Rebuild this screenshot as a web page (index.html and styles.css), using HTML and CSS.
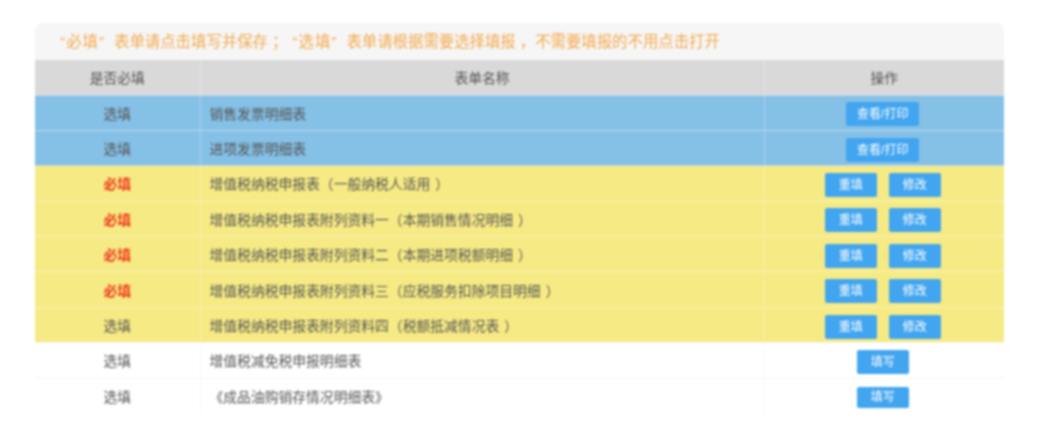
FILE: index.html
```html
<!DOCTYPE html>
<html lang="zh-CN">
<head>
<meta charset="UTF-8" />
<title>申报表单</title>
<link rel="stylesheet" href="styles.css">
</head>
<body>
  <div class="panel">
    <p class="notice"><span class="tag">“必填”</span>表单请点击填写并保存<span class="sep">；</span><span class="tag">“选填”</span>表单请根据需要选择填报<span class="sep">，</span>不需要填报的不用点击打开</p>
    <table class="forms">
      <thead>
        <tr>
          <th class="col-need">是否必填</th>
          <th class="col-name">表单名称</th>
          <th class="col-action">操作</th>
        </tr>
      </thead>
      <tbody>
        <tr class="blue">
          <td>选填</td>
          <td class="name">销售发票明细表</td>
          <td class="action"><a class="btn wide">查看/打印</a></td>
        </tr>
        <tr class="blue">
          <td>选填</td>
          <td class="name">进项发票明细表</td>
          <td class="action"><a class="btn wide">查看/打印</a></td>
        </tr>
        <tr class="yellow">
          <td class="must">必填</td>
          <td class="name">增值税纳税申报表（一般纳税人适用<span class="close">）</span></td>
          <td class="action"><a class="btn">重填</a><a class="btn">修改</a></td>
        </tr>
        <tr class="yellow">
          <td class="must">必填</td>
          <td class="name">增值税纳税申报表附列资料一（本期销售情况明细<span class="close">）</span></td>
          <td class="action"><a class="btn">重填</a><a class="btn">修改</a></td>
        </tr>
        <tr class="yellow">
          <td class="must">必填</td>
          <td class="name">增值税纳税申报表附列资料二（本期进项税额明细<span class="close">）</span></td>
          <td class="action"><a class="btn">重填</a><a class="btn">修改</a></td>
        </tr>
        <tr class="yellow">
          <td class="must">必填</td>
          <td class="name">增值税纳税申报表附列资料三（应税服务扣除项目明细<span class="close">）</span></td>
          <td class="action"><a class="btn">重填</a><a class="btn">修改</a></td>
        </tr>
        <tr class="yellow">
          <td>选填</td>
          <td class="name">增值税纳税申报表附列资料四（税额抵减情况表<span class="close">）</span></td>
          <td class="action"><a class="btn">重填</a><a class="btn">修改</a></td>
        </tr>
        <tr class="plain">
          <td>选填</td>
          <td class="name">增值税减免税申报明细表</td>
          <td class="action"><a class="btn">填写</a></td>
        </tr>
        <tr class="plain">
          <td>选填</td>
          <td class="name">《成品油购销存情况明细表》</td>
          <td class="action"><a class="btn short">填写</a></td>
        </tr>
      </tbody>
    </table>
  </div>
</body>
</html>
```

FILE: styles.css
```css
body {
  margin: 0;
  padding: 23px 40px 0 35px;
  background: white;
  font-family: "Liberation Sans", "Noto Sans CJK SC", sans-serif;
  color: #555;
  overflow: hidden;
}

.panel {
  width: 969px;
  filter: blur(1px);
}

.notice {
  margin: 0;
  height: 37px;
  line-height: 37px;
  padding-left: 25px;
  background: #f6f6f6;
  border-radius: 8px 8px 0 0;
  color: #f4a94c;
  font-size: 15.4px;
  white-space: nowrap;
}

.tag {
  letter-spacing: 1px;
  margin-right: 9px;
}

.sep {
  margin-left: 4px;
}

.sep + .tag {
  margin-left: 5px;
}

.forms {
  width: 100%;
  table-layout: fixed;
  border-collapse: collapse;
  font-size: 13.8px;
}

.col-need { width: 165px; }
.col-action { width: 240px; }

th, td {
  box-sizing: border-box;
  padding: 0;
}

th {
  height: 35px;
  background: #d9d9d9;
  font-weight: normal;
  border-left: 1px solid #e6e6e6;
}

td {
  height: 35.4px;
  text-align: center;
  border-top: 1px solid rgba(255,255,255,0.45);
  border-left: 1px solid rgba(255,255,255,0.3);
}

th:first-child, td:first-child { border-left: none; }

td.name {
  text-align: left;
  padding-left: 9px;
}

td.action {
  padding: 3px 3px 0 0;
  line-height: 0;
}

.close {
  margin-left: 5px;
}

.blue td { background: #85c0e6; }
.yellow td { background: #f6ea84; }

.plain td {
  border-top-color: #f6f6f6;
  border-left-color: #fafafa;
}

td.must {
  color: #f0351c;
  font-weight: bold;
}

.btn {
  display: inline-block;
  width: 52px;
  height: 24px;
  line-height: 24px;
  margin: 0 6px;
  background: #42a5f0;
  border-radius: 2px;
  color: white;
  font-size: 12px;
}

.btn.wide { width: 73px; }

.btn.short {
  height: 21px;
  line-height: 21px;
}
```
